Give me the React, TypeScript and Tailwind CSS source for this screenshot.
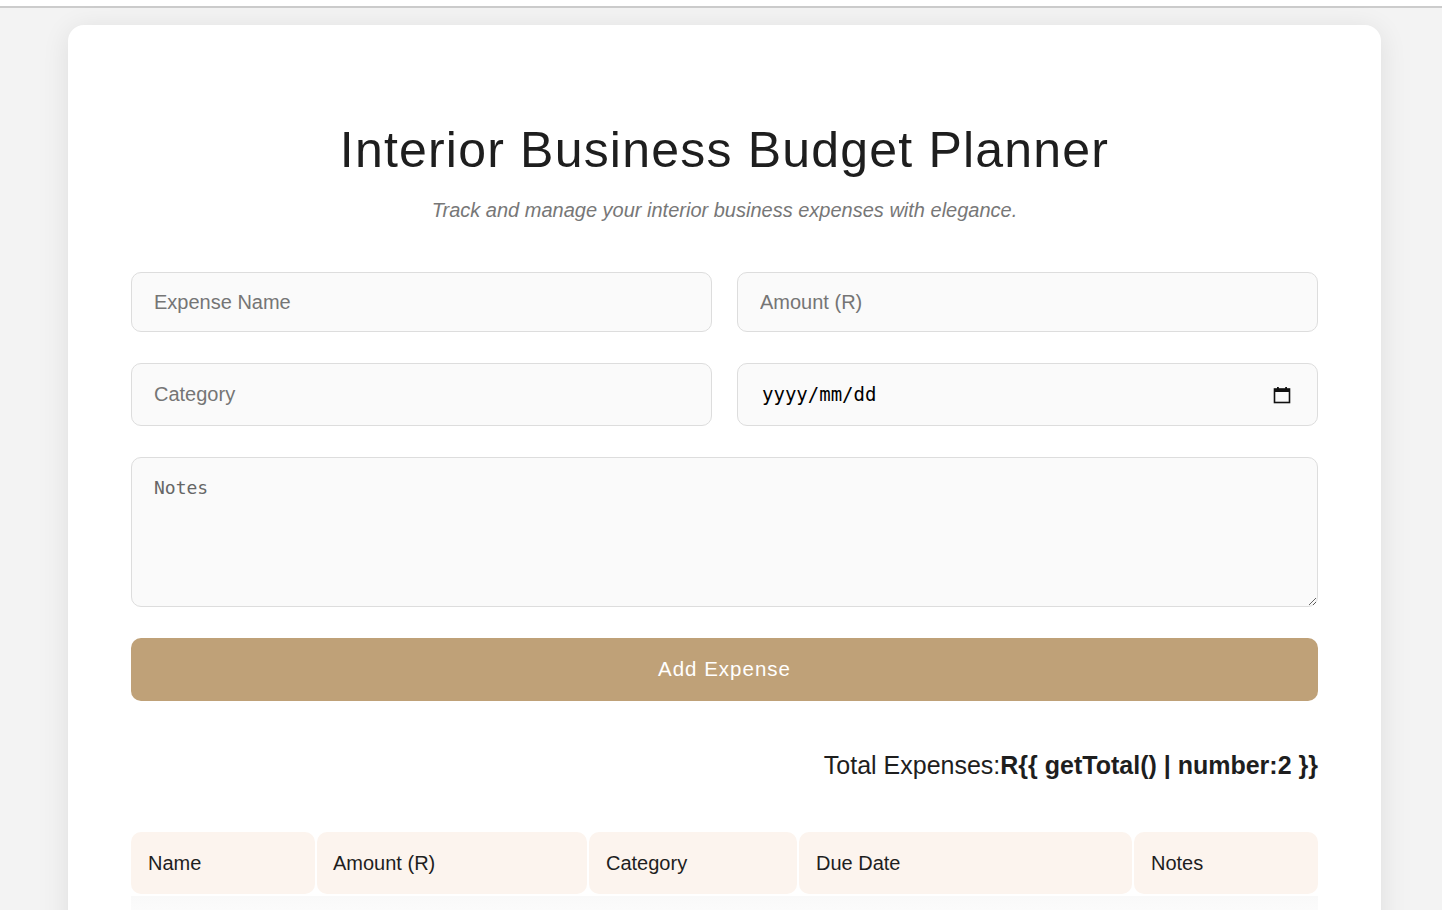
import React from "react";

const App = () => {
  return (
    <div className="min-h-screen bg-[#f3f3f3] font-['Liberation_Sans',Arial,sans-serif]">
      {/* top strip */}
      <div className="h-[8px] bg-white border-b-2 border-[#cccccc]" />

      <div className="pl-[68px] pr-[61px] pt-[17px]">
        <div className="bg-white rounded-[16px] shadow-[0_4px_28px_rgba(0,0,0,0.09)] px-[63px] pt-[96px] pb-10">
          {/* Header */}
          <h1 className="text-center text-[50px] leading-[58px] text-[#1e1e1e] tracking-[1.2px]">
            Interior Business Budget Planner
          </h1>
          <p className="text-center italic text-[20px] text-[#777777] mt-[16px]">
            Track and manage your interior business expenses with elegance.
          </p>

          {/* Form */}
          <div className="grid grid-cols-2 gap-x-[25px] gap-y-[31px] mt-[47px]">
            <input
              placeholder="Expense Name"
              className="h-[60px] rounded-[10px] border border-[#dddddd] bg-[#fafafa] px-[22px] text-[20px] text-[#333] placeholder:text-[#757575] outline-none"
            />
            <input
              placeholder="Amount (R)"
              className="h-[60px] rounded-[10px] border border-[#dddddd] bg-[#fafafa] px-[22px] text-[20px] text-[#333] placeholder:text-[#757575] outline-none"
            />
            <input
              placeholder="Category"
              className="h-[63px] rounded-[10px] border border-[#dddddd] bg-[#fafafa] px-[22px] text-[20px] text-[#333] placeholder:text-[#757575] outline-none"
            />
            <div className="h-[63px] rounded-[10px] border border-[#dddddd] bg-[#fafafa] pl-[24px] pr-[26px] flex items-center justify-between">
              <span className="font-['DejaVu_Sans_Mono',monospace] text-[19px] text-black">yyyy/mm/dd</span>
              <svg width="18" height="18" viewBox="0 0 18 18" fill="none">
                <rect x="1.5" y="3" width="15" height="13.5" stroke="#111" strokeWidth="1.6" />
                <rect x="1.5" y="3" width="15" height="3" fill="#111" />
                <rect x="4" y="1" width="1.8" height="3" fill="#111" />
                <rect x="12.2" y="1" width="1.8" height="3" fill="#111" />
              </svg>
            </div>
          </div>

          <textarea
            placeholder="Notes"
            className="mt-[31px] block w-full h-[150px] rounded-[10px] border border-[#dddddd] bg-[#fafafa] px-[22px] py-[16px] font-['DejaVu_Sans_Mono',monospace] text-[18px] text-[#333] placeholder:text-[#666666] outline-none"
          />

          <button className="mt-[31px] w-full h-[63px] rounded-[10px] bg-[#bfa178] text-white text-[20.5px] tracking-[1px]">
            Add Expense
          </button>

          {/* Total */}
          <div className="mt-[46px] text-right text-[25px] text-[#1e1e1e]">
            Total Expenses:<span className="font-bold">R{"{{"} getTotal() | number:2 {"}}"}</span>
          </div>

          {/* Table */}
          <table className="mt-[45px] w-[calc(100%+4px)] -mx-[2px] border-separate border-spacing-[2px] text-[20px] text-[#1e1e1e]">
            <thead>
              <tr>
                <th className="w-[184px] h-[62px] rounded-[10px] bg-[#fcf4ee] text-left font-normal pl-[17px]">Name</th>
                <th className="w-[270px] h-[62px] rounded-[10px] bg-[#fcf4ee] text-left font-normal pl-[16px]">Amount (R)</th>
                <th className="w-[208px] h-[62px] rounded-[10px] bg-[#fcf4ee] text-left font-normal pl-[17px]">Category</th>
                <th className="w-[333px] h-[62px] rounded-[10px] bg-[#fcf4ee] text-left font-normal pl-[17px]">Due Date</th>
                <th className="w-[184px] h-[62px] rounded-[10px] bg-[#fcf4ee] text-left font-normal pl-[17px]">Notes</th>
              </tr>
            </thead>
            <tbody>
              <tr>
                <td colSpan={5} className="h-[40px] bg-gradient-to-b from-[#f9f9f9] to-white" />
              </tr>
            </tbody>
          </table>
        </div>
      </div>
    </div>
  );
};

export default App;
